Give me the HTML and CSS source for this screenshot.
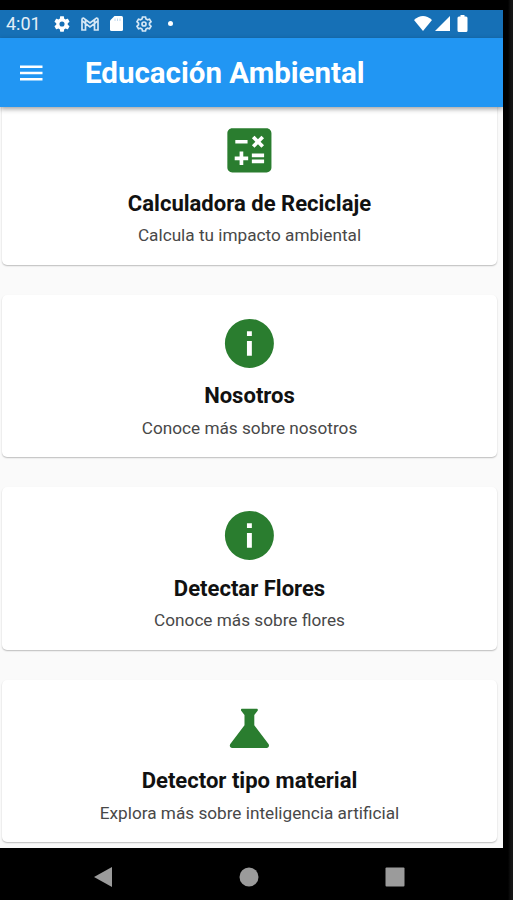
FILE: index.html
```html
<!DOCTYPE html>
<html lang="es">
<head>
<meta charset="utf-8">
<title>Educación Ambiental</title>
<link rel="stylesheet" href="styles.css">
</head>
<body>
<div class="screen">
  <div class="status">
    <span class="time">4:01</span>
    <svg class="s-gear" viewBox="2 2 20 20"><path fill-rule="evenodd" d="M19.14 12.94c.04-.3.06-.61.06-.94s-.02-.64-.07-.94l2.03-1.58c.18-.14.23-.41.12-.61l-1.92-3.32c-.12-.22-.37-.29-.59-.22l-2.39.96c-.5-.38-1.03-.7-1.62-.94l-.36-2.54c-.04-.24-.24-.41-.48-.41h-3.84c-.24 0-.43.17-.47.41l-.36 2.54c-.59.24-1.13.57-1.62.94l-2.39-.96c-.22-.08-.47 0-.59.22L2.74 8.87c-.12.21-.08.47.12.61l2.03 1.58c-.05.3-.09.63-.09.94s.02.64.07.94l-2.03 1.58c-.18.14-.23.41-.12.61l1.92 3.32c.12.22.37.29.59.22l2.39-.96c.5.38 1.03.7 1.62.94l.36 2.54c.05.24.24.41.48.41h3.84c.24 0 .44-.17.47-.41l.36-2.54c.59-.24 1.13-.56 1.62-.94l2.39.96c.22.08.47 0 .59-.22l1.92-3.32c.12-.22.07-.47-.12-.61zM12 15.200A3.200 3.200 0 1 1 12 8.800a3.200 3.200 0 0 1 0 6.400z"/></svg>
    <svg class="s-mail" viewBox="0 0 18 14"><path class="line" d="M1 13V2.500Q1 1 2.500 1L9 6l6.500-5Q17 1 17 2.500V13h-3.500V6.500L9 10 4.500 6.500V13zM4.500 6.500 1 3.700M13.500 6.500 17 3.700M4.500 2.500v4M13.500 2.500v4"/></svg>
    <svg class="s-sd" viewBox="0 0 13 15"><path d="M4.500 0H11.500Q13 0 13 1.500V13.500Q13 15 11.500 15H1.500Q0 15 0 13.500V4.500z"/><path class="slots" d="M4.500 2.500v2.500h1V2.500zM7 2.500v2.500h1V2.500zM9.500 2.500v2.500h1V2.500z"/></svg>
    <svg class="s-cog" viewBox="0 0 16 16"><path class="line" d="M6.500 1h3l.5 2 1.500.8 2-.6 1.500 2.600L13.500 7.200v1.600L15 10.200l-1.500 2.600-2-.6-1.500.8-.5 2h-3L6 13l-1.500-.8-2 .6L1 10.200l1.500-1.400V7.200L1 5.800l1.500-2.600 2 .6L6 3z"/><circle class="line" cx="8" cy="8" r="2"/></svg>
    <span class="dot"></span>
    <svg class="s-wifi" viewBox="0 0 18 15"><path d="M0 4Q9-4 18 4L9 15z"/></svg>
    <svg class="s-cell" viewBox="0 0 15 15"><path d="M15 0V15H0z"/></svg>
    <svg class="s-batt" viewBox="0 0 10 17"><path d="M3 0h4v1.500h1.500Q10 1.500 10 3v12.500Q10 17 8.500 17h-7Q0 17 0 15.500V3Q0 1.500 1.500 1.500H3z"/></svg>
  </div>
  <header class="appbar">
    <svg class="menu" viewBox="3 6 18 12"><path d="M3 18h18v-2H3v2zm0-5h18v-2H3v2zm0-7v2h18V6H3z"/></svg>
    <h1>Educación Ambiental</h1>
  </header>
  <main class="list">
    <section class="card">
      <svg class="icon" viewBox="0 0 24 24"><path d="M19 3H5c-1.100 0-2 .9-2 2v14c0 1.100.9 2 2 2h14c1.100 0 2-.9 2-2V5c0-1.100-.9-2-2-2zm-5.970 4.060L14.090 6l1.410 1.410L16.910 6l1.060 1.060-1.410 1.410 1.410 1.410-1.060 1.060-1.410-1.400-1.410 1.410-1.060-1.060 1.410-1.410zM6.250 7.720h5v1.500h-5zM11.500 16h-2v2H8v-2H6v-1.500h2v-2h1.500v2h2zm6.500 1.250h-5v-1.500h5zm0-2.500h-5v-1.500h5z"/></svg>
      <h2>Calculadora de Reciclaje</h2>
      <p>Calcula tu impacto ambiental</p>
    </section>
    <section class="card">
      <svg class="icon" viewBox="0 0 24 24"><path d="M12 2a10 10 0 1 0 0 20 10 10 0 0 0 0-20zm1 15h-2v-6h2zm0-8h-2V7h2z"/></svg>
      <h2>Nosotros</h2>
      <p>Conoce más sobre nosotros</p>
    </section>
    <section class="card">
      <svg class="icon" viewBox="0 0 24 24"><path d="M12 2a10 10 0 1 0 0 20 10 10 0 0 0 0-20zm1 15h-2v-6h2zm0-8h-2V7h2z"/></svg>
      <h2>Detectar Flores</h2>
      <p>Conoce más sobre flores</p>
    </section>
    <section class="card">
      <svg class="icon" viewBox="0 0 24 24"><path d="M19.800 18.400 14 10.670V6.500l1.350-1.690c.26-.33.03-.81-.39-.81H9.040c-.42 0-.65.48-.39.81L10 6.500v4.170L4.200 18.400c-.49.66-.02 1.600.8 1.600h14c.82 0 1.290-.94.8-1.600z"/></svg>
      <h2>Detector tipo material</h2>
      <p>Explora más sobre inteligencia artificial</p>
    </section>
  </main>
</div>
<nav class="nav">
  <svg viewBox="0 0 20 20"><path d="M19 0V20L1 10z"/></svg>
  <svg viewBox="0 0 20 20"><circle cx="10" cy="10" r="9.500"/></svg>
  <svg viewBox="0 0 20 20"><rect x=".5" y=".5" width="19" height="19" rx="1"/></svg>
</nav>
</body>
</html>
```
FILE: styles.css
```css
* { box-sizing: border-box; }
body {
  margin: 0;
  height: 900px;
  overflow: hidden;
  background: linear-gradient(90deg, #000 508px, #141414 511px);
  font-family: Roboto, "Liberation Sans", sans-serif;
  padding-top: 9.500px;
}
.screen {
  width: 503px;
  height: 838.500px;
  overflow: hidden;
  background: #fafafa;
}
.status {
  height: 28.500px;
  background: #1670b6;
  display: flex;
  align-items: center;
  padding-left: 6px;
  color: #e3eef7;
}
.status svg { flex: none; fill: #fff; }
.status svg .line { fill: none; stroke: #d6e7f5; stroke-width: 1.700; }
.status svg .slots { fill: #c3daee; }
.time { width: 48px; font-size: 18px; line-height: 28px; padding-top: 1px; }
.s-gear { width: 16px; height: 16px; }
.s-mail { width: 18px; height: 14px; margin-left: 11px; }
.s-sd { width: 13px; height: 15px; margin-left: 11px; }
.s-cog { width: 16px; height: 16px; margin-left: 13px; }
.dot { width: 5px; height: 5px; border-radius: 50%; background: #fff; margin-left: 16px; }
.s-wifi { width: 18px; height: 15px; margin-left: 241px; }
.s-cell { width: 15px; height: 15px; margin-left: 3px; }
.s-batt { width: 11px; height: 17px; margin-left: 7px; }
.appbar {
  position: relative;
  height: 69px;
  background: #2196f3;
  display: flex;
  align-items: center;
  padding-left: 20px;
  box-shadow: 0 2px 5px rgba(0, 0, 0, .38);
}
.menu { width: 22.500px; height: 16px; fill: #fff; }
h1 {
  margin: 0 0 0 42.500px;
  font-size: 29.500px;
  line-height: 36px;
  font-weight: 700;
  color: #fff;
  white-space: nowrap;
}
.list {
  display: flex;
  flex-direction: column;
  gap: 30px;
  margin: -5px 6px 0 2px;
}
.card {
  height: 162.500px;
  flex: none;
  padding-top: 19.200px;
  background: #fff;
  border-radius: 5px;
  box-shadow: 0 1px 1.500px rgba(0, 0, 0, .25);
  display: flex;
  flex-direction: column;
  align-items: center;
}
.icon { width: 58.800px; height: 58.800px; fill: #2a7d2f; }
h2 {
  margin: 11px 0 0;
  font-size: 22.050px;
  line-height: 26px;
  font-weight: 700;
  color: #111;
}
p {
  margin: 8.300px 0 0;
  font-size: 17.200px;
  line-height: 20px;
  color: #484848;
}
.nav {
  width: 503px;
  height: 52px;
  padding: 19px 0 0 93px;
  display: flex;
  gap: 126px;
}
.nav svg { width: 20px; height: 20px; fill: #9b9b9b; }
```
